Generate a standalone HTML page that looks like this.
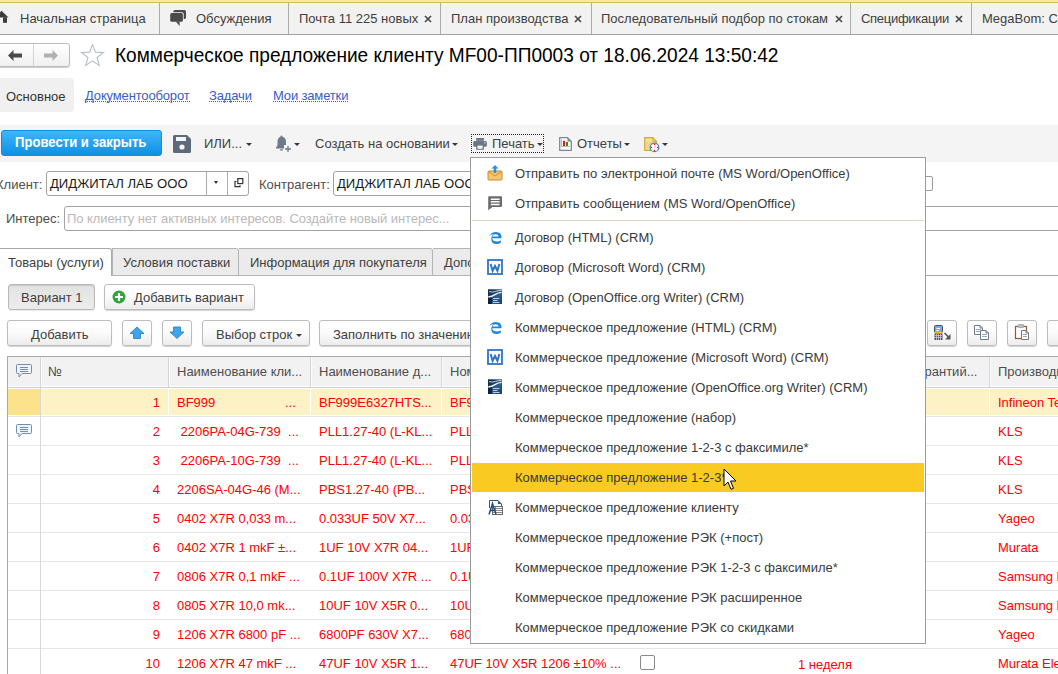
<!DOCTYPE html><html><head><meta charset="utf-8"><style>
*{box-sizing:border-box;margin:0;padding:0}
html,body{width:1058px;height:674px;overflow:hidden;background:#fff;font-family:"Liberation Sans",sans-serif;font-size:13px;color:#333;line-height:15px}
.a{position:absolute;white-space:nowrap}
.tsep{top:3px;width:1px;height:31px;background:#ababab}
.tt{top:10px;color:#404040}
.cls{top:10px;color:#555;font-size:15px;font-weight:bold}
.link{color:#3a5cc6;letter-spacing:-0.15px}
.arr{width:0;height:0;border-left:3px solid transparent;border-right:3px solid transparent;border-top:3px solid #3a3a3a}
.fld{border:1px solid #a3a3a3;border-radius:3px;background:#fff}
.btn{border:1px solid #bdbdbd;border-radius:3px;background:linear-gradient(#fff 0%,#fbfbfb 50%,#ececec 100%);box-shadow:0 1px 1px rgba(0,0,0,.18)}
.hl{color:#4d4d4d}
.red{color:#f00}
.mi{left:515px;color:#3a3a3a}
.gl{background:#e6e6e6;height:1px}
.t{font-size:13.6px;transform:translateY(0.5px) scaleX(0.956);transform-origin:0 0}
.tra{transform-origin:100% 0}
</style></head><body>
<div class="a" style="left:0;top:0;width:1058px;height:2px;background:#fce996"></div><div class="a" style="left:0;top:2px;width:1058px;height:1px;background:#c9bc6b"></div>
<div class="a" style="left:0;top:3px;width:1058px;height:32px;background:#f2f2f2;border-bottom:1px solid #a2a2a2"></div>
<svg class="a" style="left:0;top:10px" width="10" height="14" viewBox="0 0 10 14"><path d="M-5.5 7.6 L1.5 0.8 L8.5 7.6 Z" fill="#3c3c3c"/><rect x="3" y="7.4" width="4" height="5.4" fill="#3c3c3c"/></svg>
<div class="a tt t" style="left:20px">Начальная страница</div>
<div class="a tsep" style="left:159px"></div>
<svg class="a" style="left:169px;top:9px" width="19" height="18" viewBox="0 0 19 18"><rect x="4.3" y="1" width="12.7" height="9" rx="1.6" fill="#4a4a4a"/><rect x="0.3" y="3.2" width="14.4" height="10.4" rx="2" fill="#f2f2f2"/><rect x="1.2" y="4" width="12.7" height="8.8" rx="1.6" fill="#4a4a4a"/><path d="M6.8 12.5 L10.6 16.9 L10.6 12.5 Z" fill="#4a4a4a"/></svg>
<div class="a tt t" style="left:196px">Обсуждения</div>
<div class="a tsep" style="left:288px"></div>
<div class="a tt t" style="left:299px">Почта 11 225 новых</div>
<svg class="a" style="left:424px;top:15px" width="8" height="8" viewBox="0 0 8 8"><path d="M1 1 L7 7 M7 1 L1 7" stroke="#4a4a4a" stroke-width="1.7"/></svg>
<div class="a tsep" style="left:440px"></div>
<div class="a tt t" style="left:451px">План производства</div>
<svg class="a" style="left:574px;top:15px" width="8" height="8" viewBox="0 0 8 8"><path d="M1 1 L7 7 M7 1 L1 7" stroke="#4a4a4a" stroke-width="1.7"/></svg>
<div class="a tsep" style="left:591px"></div>
<div class="a tt t" style="left:601px">Последовательный подбор по стокам</div>
<svg class="a" style="left:835px;top:15px" width="8" height="8" viewBox="0 0 8 8"><path d="M1 1 L7 7 M7 1 L1 7" stroke="#4a4a4a" stroke-width="1.7"/></svg>
<div class="a tsep" style="left:850px"></div>
<div class="a tt t" style="left:861px;letter-spacing:-0.3px">Спецификации</div>
<svg class="a" style="left:955px;top:15px" width="8" height="8" viewBox="0 0 8 8"><path d="M1 1 L7 7 M7 1 L1 7" stroke="#4a4a4a" stroke-width="1.7"/></svg>
<div class="a tsep" style="left:971px"></div>
<div class="a tt t" style="left:982px">MegaBom: Спецификации</div>
<div class="a" style="left:-4px;top:43px;width:74px;height:24px;border:1px solid #bcbcbc;border-radius:3px;background:linear-gradient(#fff,#f0f0f0);box-shadow:0 1px 1px rgba(0,0,0,.2)"></div>
<div class="a" style="left:33px;top:44px;width:1px;height:22px;background:#d4d4d4"></div>
<svg class="a" style="left:8px;top:50px" width="14" height="11" viewBox="0 0 14 11"><path d="M0 5.5 L5.5 0 V3.5 H14 V7.5 H5.5 V11 Z" fill="#4a4a4a"/></svg>
<svg class="a" style="left:44px;top:50px" width="14" height="11" viewBox="0 0 14 11"><path d="M14 5.5 L8.5 0 V3.5 H0 V7.5 H8.5 V11 Z" fill="#b0b0b0"/></svg>
<svg class="a" style="left:80px;top:44px" width="25" height="23" viewBox="0 0 25 23"><path d="M12.50 0.40 L15.32 8.12 L23.53 8.42 L17.07 13.48 L19.32 21.38 L12.50 16.80 L5.68 21.38 L7.93 13.48 L1.47 8.42 L9.68 8.12 Z" fill="none" stroke="#b4bec8" stroke-width="1.1" stroke-linejoin="miter"/></svg>
<div class="a" style="left:115px;top:44px;font-size:19.6px;line-height:22px;color:#000;transform:scaleX(0.974);transform-origin:0 0">Коммерческое предложение клиенту MF00-ПП0003 от 18.06.2024 13:50:42</div>
<div class="a" style="left:-4px;top:78px;width:78px;height:34px;background:#f0f0f0;border-radius:4px"></div>
<div class="a t" style="left:6px;top:88px;color:#333">Основное</div>
<div class="a link" style="left:85px;top:88px">Документооборот<div style="position:absolute;left:0;right:0;top:13px;border-bottom:1px dotted #3a5cc6"></div></div>
<div class="a link" style="left:209px;top:88px">Задачи<div style="position:absolute;left:0;right:0;top:13px;border-bottom:1px dotted #3a5cc6"></div></div>
<div class="a link" style="left:273px;top:88px">Мои заметки<div style="position:absolute;left:0;right:0;top:13px;border-bottom:1px dotted #3a5cc6"></div></div>
<div class="a" style="left:0;top:125px;width:1058px;height:37px;background:#f4f4f4"></div>
<div class="a" style="left:1px;top:130px;width:161px;height:26px;border-radius:3px;background:linear-gradient(#42b5f8,#0b91e7);border:1px solid #0f8ee2"></div>
<div class="a" style="left:15px;top:135px;color:#fff;font-weight:bold;font-size:13.8px;transform:scaleX(0.95);transform-origin:0 0">Провести и закрыть</div>
<svg class="a" style="left:173px;top:135px" width="18" height="18" viewBox="0 0 18 18"><path d="M1.5 0 H14 L18 4 V16.5 Q18 18 16.5 18 H1.5 Q0 18 0 16.5 V1.5 Q0 0 1.5 0 Z" fill="#5e6a7b"/><rect x="3" y="2" width="10" height="4" fill="#f4f4f4"/><circle cx="9" cy="12" r="2.6" fill="#f4f4f4"/></svg>
<div class="a t" style="left:204px;top:135px;color:#404040">ИЛИ...</div>
<div class="a arr" style="left:246px;top:143px"></div>
<svg class="a" style="left:275px;top:135px" width="17" height="18" viewBox="0 0 17 18"><path d="M6.5 0.5 Q7.5 0.5 7.5 1.7 Q11 2.7 11 7 V10.5 L12.5 12.5 V13.5 H1 V12.5 L2.5 10.5 V7 Q2.5 2.7 5.5 1.7 Q5.5 0.5 6.5 0.5 Z" fill="#6f7b8a"/><path d="M5 14.2 H8 Q8 15.7 6.5 15.7 Q5 15.7 5 14.2Z" fill="#6f7b8a"/><rect x="9" y="10" width="8" height="8" fill="#f4f4f4"/><path d="M13 11 V17 M10 14 H16" stroke="#6f7b8a" stroke-width="1.3"/></svg>
<div class="a arr" style="left:294px;top:143px"></div>
<div class="a t" style="left:315px;top:135px;color:#404040">Создать на основании</div>
<div class="a arr" style="left:452px;top:143px"></div>
<div class="a" style="left:471px;top:134px;width:73px;height:19px;border:1px dotted #222"></div>
<svg class="a" style="left:473px;top:137px" width="15" height="14" viewBox="0 0 15 14"><rect x="3.2" y="1" width="7.7" height="2.8" fill="#6b7686"/><rect x="0.2" y="3.9" width="13.7" height="5.9" rx="1.5" fill="#6b7686"/><rect x="3.2" y="7.8" width="7.7" height="5" fill="#6b7686"/><rect x="4.5" y="8.6" width="5.1" height="3.2" fill="#f4f4f4"/><rect x="11.2" y="5.2" width="1.2" height="1.2" fill="#e8e8e8"/></svg>
<div class="a t" style="left:492px;top:135px;color:#404040">Печать</div>
<div class="a arr" style="left:537px;top:143px"></div>
<svg class="a" style="left:559px;top:137px" width="13" height="14" viewBox="0 0 13 14"><path d="M0.7 0.7 H8.5 L12.3 4.5 V13.3 H0.7 Z" fill="#fff" stroke="#7d8894" stroke-width="1.3" stroke-linejoin="round"/><path d="M8.5 0.7 L12.3 4.5 H8.5 Z" fill="#7d8894"/><path d="M2.5 2.5 V9.5 H11" fill="none" stroke="#8fa0b0" stroke-width="0.7"/><rect x="4" y="3.8" width="2" height="5.2" fill="#f01010"/><rect x="7" y="5" width="2" height="4" fill="#10a010"/></svg>
<div class="a t" style="left:577px;top:135px;color:#404040">Отчеты</div>
<div class="a arr" style="left:624px;top:143px"></div>
<svg class="a" style="left:644px;top:137px" width="16" height="16" viewBox="0 0 16 16"><path d="M0.7 0.7 H8.8 L12.3 4.2 V13.3 H0.7 Z" fill="#f6e08e" stroke="#c9a94a" stroke-width="1.2" stroke-linejoin="round"/><path d="M8.8 0.7 V4.2 H12.3" fill="none" stroke="#c9a94a"/><path d="M2.5 6 H4 M5 6 H7.5 M2.5 8 H3 M4 8 H6 M2.5 10 H4.5" stroke="#d8bd60" stroke-width="0.9"/><circle cx="10.5" cy="10.4" r="4.3" fill="#fff" stroke="#4a7fc0" stroke-width="1.2"/><circle cx="10.5" cy="7.4" r="0.7" fill="#e00"/><circle cx="10.5" cy="13.4" r="0.7" fill="#e00"/><circle cx="7.5" cy="10.4" r="0.7" fill="#e00"/><circle cx="13.5" cy="10.4" r="0.7" fill="#e00"/><path d="M10.5 10.4 L12 8.4" stroke="#7a9fd8" stroke-width="0.9"/></svg>
<div class="a arr" style="left:662px;top:143px"></div>
<div class="a t" style="left:-4px;top:176px;color:#4d4d4d">Клиент:</div>
<div class="a fld" style="left:46px;top:171px;width:203px;height:25px"></div>
<div class="a" style="left:206px;top:172px;width:1px;height:23px;background:#acacac"></div>
<div class="a" style="left:227px;top:172px;width:1px;height:23px;background:#acacac"></div>
<div class="a" style="left:50px;top:176px;color:#1a1a1a;font-size:13.1px">ДИДЖИТАЛ ЛАБ ООО</div>
<div class="a" style="left:214px;top:181px;width:0;height:0;border-left:2.5px solid transparent;border-right:2.5px solid transparent;border-top:3px solid #333"></div>
<svg class="a" style="left:234px;top:177px" width="10" height="11" viewBox="0 0 10 11"><rect x="3.8" y="1.6" width="5" height="5" fill="none" stroke="#333" stroke-width="1.2"/><path d="M2.4 4.5 H1 V9.6 H6 V8.2" fill="none" stroke="#333" stroke-width="1.2"/></svg>
<div class="a t" style="left:259px;top:176px;color:#4d4d4d">Контрагент:</div>
<div class="a fld" style="left:333px;top:171px;width:560px;height:25px"></div>
<div class="a" style="left:918px;top:176px;width:15px;height:15px;border:1px solid #9a9a9a;border-radius:2px;background:#fff"></div>
<div class="a" style="left:337px;top:176px;color:#1a1a1a;font-size:13.1px">ДИДЖИТАЛ ЛАБ ООО</div>
<div class="a t" style="left:6px;top:210px;color:#4d4d4d">Интерес:</div>
<div class="a fld" style="left:64px;top:206px;width:1000px;height:25px"></div>
<div class="a t" style="left:67px;top:210px;color:#b9b9b9;letter-spacing:-0.07px">По клиенту нет активных интересов. Создайте новый интерес...</div>
<div class="a" style="left:0;top:275px;width:1058px;height:1px;background:#a9a9a9"></div>
<div class="a" style="left:-2px;top:248px;width:114px;height:28px;border:1px solid #a9a9a9;border-bottom:none;border-radius:3px 3px 0 0;background:#fff"></div>
<div class="a t" style="left:8px;top:254px;color:#404040">Товары (услуги)</div>
<div class="a" style="left:112px;top:248px;width:127px;height:28px;border:1px solid #b4b4b4;border-left:none;border-radius:0 3px 0 0;background:#ebebeb"></div>
<div class="a t" style="left:123px;top:254px;color:#404040">Условия поставки</div>
<div class="a" style="left:239px;top:248px;width:194px;height:28px;border:1px solid #b4b4b4;border-left:none;border-radius:0 3px 0 0;background:#ebebeb"></div>
<div class="a t" style="left:250px;top:254px;color:#404040">Информация для покупателя</div>
<div class="a" style="left:433px;top:248px;width:120px;height:28px;border:1px solid #b4b4b4;border-left:none;border-radius:0 3px 0 0;background:#ebebeb"></div>
<div class="a t" style="left:444px;top:254px;color:#404040">Дополнительно</div>
<div class="a" style="left:112px;top:248px;width:1px;height:28px;background:#b4b4b4"></div>
<div class="a" style="left:8px;top:284px;width:87px;height:26px;border:1px solid #b9b9b9;border-radius:3px;background:linear-gradient(#e2e2e2,#ececec);box-shadow:inset 0 1px 1px rgba(0,0,0,.12), 0 1px 0 rgba(0,0,0,.08)"></div>
<div class="a t" style="left:21px;top:289px;color:#404040">Вариант 1</div>
<div class="a btn" style="left:104px;top:284px;width:151px;height:26px"></div>
<svg class="a" style="left:112px;top:290px" width="14" height="14" viewBox="0 0 14 14"><circle cx="7" cy="7" r="6.5" fill="#2fa43a"/><path d="M7 3 V11 M3 7 H11" stroke="#fff" stroke-width="2.2"/></svg>
<div class="a t" style="left:134px;top:289px;color:#404040">Добавить вариант</div>
<div class="a btn" style="left:7px;top:320px;width:105px;height:26px"></div>
<div class="a t" style="left:31px;top:326px;color:#404040">Добавить</div>
<div class="a btn" style="left:122px;top:320px;width:30px;height:26px"></div>
<svg class="a" style="left:129px;top:326px" width="16" height="14" viewBox="0 0 16 14"><path d="M8 1 L15 7.5 H11.5 V12.5 H4.5 V7.5 H1 Z" fill="#3fa5e8" stroke="#2b84c6" stroke-width="0.9" stroke-linejoin="round"/></svg>
<div class="a btn" style="left:162px;top:320px;width:30px;height:26px"></div>
<svg class="a" style="left:169px;top:326px" width="16" height="14" viewBox="0 0 16 14"><path d="M8 12.5 L15 6 H11.5 V1 H4.5 V6 H1 Z" fill="#3fa5e8" stroke="#2b84c6" stroke-width="0.9" stroke-linejoin="round"/></svg>
<div class="a btn" style="left:202px;top:320px;width:108px;height:26px"></div>
<div class="a t" style="left:216px;top:326px;color:#404040">Выбор строк</div>
<div class="a arr" style="left:296px;top:334px"></div>
<div class="a btn" style="left:319px;top:320px;width:200px;height:26px"></div>
<div class="a t" style="left:333px;top:326px;color:#404040">Заполнить по значению</div>
<div class="a btn" style="left:927px;top:320px;width:30px;height:26px"></div>
<div class="a btn" style="left:967px;top:320px;width:30px;height:26px"></div>
<div class="a btn" style="left:1007px;top:320px;width:30px;height:26px"></div>
<div class="a btn" style="left:1047px;top:320px;width:30px;height:26px"></div>
<svg class="a" style="left:926px;top:318px" width="132" height="30" viewBox="926 318 132 30">
<rect x="934.5" y="325.5" width="8" height="7" rx="1" fill="#62b6ee" stroke="#4a4f57"/>
<path d="M936.5 328.5 H940 M936.5 330.5 H939" stroke="#fff" stroke-width="1"/>
<rect x="935" y="332" width="7" height="2" fill="#f2cf1c"/>
<rect x="934.5" y="333.5" width="8" height="6.5" fill="#4f545c"/>
<path d="M936.5 334 V340 M938.5 334 V340 M940.5 334 V340" stroke="#c9ccd1" stroke-width="0.8"/>
<path d="M935 335.5 H942 M935 337.5 H942" stroke="#c9ccd1" stroke-width="0.8"/>
<path d="M944.5 333 L949.5 338" stroke="#555" stroke-width="1.6"/>
<path d="M950.5 334 V339.5 H945 Z" fill="#555"/>
<path d="M974.5 325.5 H980 L982.5 328 V334.5 H974.5 Z" fill="#fff" stroke="#6e7b8b"/>
<path d="M980 325.5 V328 H982.5" fill="none" stroke="#6e7b8b"/>
<path d="M976 329.5 H981 M976 331.5 H981" stroke="#9aa6b4"/>
<path d="M980.5 330.5 H986 L988.5 333 V339.5 H980.5 Z" fill="#fff" stroke="#6e7b8b"/>
<path d="M986 330.5 V333 H988.5" fill="none" stroke="#6e7b8b"/>
<path d="M982 334.5 H987 M982 336.5 H987" stroke="#9aa6b4"/>
<rect x="1015.5" y="326.5" width="11" height="12" fill="#fff" stroke="#a0522d" stroke-width="1.2"/>
<rect x="1018" y="324.5" width="6" height="3" rx="1" fill="#b9bec4" stroke="#8a8f96" stroke-width="0.6"/>
<path d="M1021.5 330.5 H1026 L1028.5 333 V339.5 H1021.5 Z" fill="#fff" stroke="#6e7b8b"/>
<path d="M1026 330.5 V333 H1028.5" fill="none" stroke="#6e7b8b"/>
<path d="M1023 334.5 H1027 M1023 336.5 H1027" stroke="#9aa6b4"/>
</svg>
<div class="a" style="left:7px;top:356px;width:1060px;height:330px;border:1px solid #a9a9a9;border-right:none;border-bottom:none"></div>
<div class="a" style="left:8px;top:357px;width:1050px;height:29px;background:#f2f2f2"></div><div class="a" style="left:8px;top:387px;width:1050px;height:1px;background:#cfcfcf"></div>
<div class="a" style="left:40px;top:357px;width:2px;height:30px;border-left:1px solid #d6d6d6;border-right:1px solid #fbfbfb"></div>
<div class="a" style="left:168px;top:357px;width:2px;height:30px;border-left:1px solid #d6d6d6;border-right:1px solid #fbfbfb"></div>
<div class="a" style="left:310px;top:357px;width:2px;height:30px;border-left:1px solid #d6d6d6;border-right:1px solid #fbfbfb"></div>
<div class="a" style="left:441px;top:357px;width:2px;height:30px;border-left:1px solid #d6d6d6;border-right:1px solid #fbfbfb"></div>
<div class="a" style="left:989px;top:357px;width:2px;height:30px;border-left:1px solid #d6d6d6;border-right:1px solid #fbfbfb"></div>
<svg class="a" style="left:16px;top:364px" width="16" height="14" viewBox="0 0 16 14"><path d="M1.5 0.5 H14.5 Q15.5 0.5 15.5 1.5 V8.5 Q15.5 9.5 14.5 9.5 H6 L3 13 V9.5 H1.5 Q0.5 9.5 0.5 8.5 V1.5 Q0.5 0.5 1.5 0.5 Z" fill="#eef4fb" stroke="#6f8fb0"/><path d="M4 3.5 H12 M4 5.5 H12 M4 7.5 H12" stroke="#6f8fb0"/></svg>
<div class="a hl t" style="left:48px;top:363px">№</div>
<div class="a hl t" style="left:177px;top:363px">Наименование кли...</div>
<div class="a hl t" style="left:319px;top:363px">Наименование д...</div>
<div class="a hl t" style="left:450px;top:363px">Номенклатура</div>
<div class="a hl t" style="left:911px;top:363px">Гарантий...</div>
<div class="a hl t" style="left:998px;top:363px">Производитель</div>
<div class="a" style="left:8px;top:389px;width:32px;height:26px;background:#fce28b"></div>
<div class="a" style="left:41px;top:389px;width:1017px;height:26px;background:#fdf1c6"></div>
<div class="a" style="left:168px;top:389px;width:1px;height:26px;background:#fff"></div>
<div class="a" style="left:310px;top:389px;width:1px;height:26px;background:#fff"></div>
<div class="a" style="left:441px;top:389px;width:1px;height:26px;background:#fff"></div>
<div class="a" style="left:989px;top:389px;width:1px;height:26px;background:#fff"></div>
<div class="a gl" style="left:8px;top:416px;width:1050px"></div>
<div class="a red tra t" style="left:40px;top:394px;width:120px;text-align:right">1</div>
<div class="a red t" style="left:177px;top:394px">BF999</div><div class="a red t" style="left:285px;top:394px">...</div>
<div class="a red t" style="left:319px;top:394px">BF999E6327HTS...</div>
<div class="a red t" style="left:450px;top:394px">BF999E6327HTSA1</div>
<div class="a red t" style="left:998px;top:394px">Infineon Technologies</div>
<div class="a gl" style="left:8px;top:445px;width:1050px"></div>
<div class="a red tra t" style="left:40px;top:423px;width:120px;text-align:right">2</div>
<div class="a red t" style="left:177px;top:423px;white-space:pre"> 2206PA-04G-739  ...</div>
<div class="a red t" style="left:319px;top:423px">PLL1.27-40 (L-KL...</div>
<div class="a red t" style="left:450px;top:423px">PLL1.27-40</div>
<div class="a red t" style="left:998px;top:423px">KLS</div>
<div class="a gl" style="left:8px;top:474px;width:1050px"></div>
<div class="a red tra t" style="left:40px;top:452px;width:120px;text-align:right">3</div>
<div class="a red t" style="left:177px;top:452px;white-space:pre"> 2206PA-10G-739  ...</div>
<div class="a red t" style="left:319px;top:452px">PLL1.27-40 (L-KL...</div>
<div class="a red t" style="left:450px;top:452px">PLL1.27-40</div>
<div class="a red t" style="left:998px;top:452px">KLS</div>
<div class="a gl" style="left:8px;top:503px;width:1050px"></div>
<div class="a red tra t" style="left:40px;top:481px;width:120px;text-align:right">4</div>
<div class="a red t" style="left:177px;top:481px">2206SA-04G-46 (M...</div>
<div class="a red t" style="left:319px;top:481px">PBS1.27-40 (PB...</div>
<div class="a red t" style="left:450px;top:481px">PBS1.27-40</div>
<div class="a red t" style="left:998px;top:481px">KLS</div>
<div class="a gl" style="left:8px;top:532px;width:1050px"></div>
<div class="a red tra t" style="left:40px;top:510px;width:120px;text-align:right">5</div>
<div class="a red t" style="left:177px;top:510px">0402 X7R 0,033 m...</div>
<div class="a red t" style="left:319px;top:510px">0.033UF 50V X7...</div>
<div class="a red t" style="left:450px;top:510px">0.033UF</div>
<div class="a red t" style="left:998px;top:510px">Yageo</div>
<div class="a gl" style="left:8px;top:561px;width:1050px"></div>
<div class="a red tra t" style="left:40px;top:539px;width:120px;text-align:right">6</div>
<div class="a red t" style="left:177px;top:539px">0402 X7R 1 mkF ±...</div>
<div class="a red t" style="left:319px;top:539px">1UF 10V X7R 04...</div>
<div class="a red t" style="left:450px;top:539px">1UF 10V</div>
<div class="a red t" style="left:998px;top:539px">Murata</div>
<div class="a gl" style="left:8px;top:590px;width:1050px"></div>
<div class="a red tra t" style="left:40px;top:568px;width:120px;text-align:right">7</div>
<div class="a red t" style="left:177px;top:568px">0806 X7R 0,1 mkF ...</div>
<div class="a red t" style="left:319px;top:568px">0.1UF 100V X7R ...</div>
<div class="a red t" style="left:450px;top:568px">0.1UF</div>
<div class="a red t" style="left:998px;top:568px">Samsung Electro</div>
<div class="a gl" style="left:8px;top:619px;width:1050px"></div>
<div class="a red tra t" style="left:40px;top:597px;width:120px;text-align:right">8</div>
<div class="a red t" style="left:177px;top:597px">0805 X7R 10,0 mk...</div>
<div class="a red t" style="left:319px;top:597px">10UF 10V X5R 0...</div>
<div class="a red t" style="left:450px;top:597px">10UF</div>
<div class="a red t" style="left:998px;top:597px">Samsung Electro</div>
<div class="a gl" style="left:8px;top:648px;width:1050px"></div>
<div class="a red tra t" style="left:40px;top:626px;width:120px;text-align:right">9</div>
<div class="a red t" style="left:177px;top:626px">1206 X7R 6800 pF ...</div>
<div class="a red t" style="left:319px;top:626px">6800PF 630V X7...</div>
<div class="a red t" style="left:450px;top:626px">6800PF</div>
<div class="a red t" style="left:998px;top:626px">Yageo</div>
<div class="a gl" style="left:8px;top:677px;width:1050px"></div>
<div class="a red tra t" style="left:40px;top:655px;width:120px;text-align:right">10</div>
<div class="a red t" style="left:177px;top:655px">1206 X7R 47 mkF ...</div>
<div class="a red t" style="left:319px;top:655px">47UF 10V X5R 1...</div>
<div class="a red t" style="left:450px;top:655px">47UF 10V X5R 1206 ±10% ...</div>
<div class="a red t" style="left:998px;top:655px">Murata Electronics</div>
<div class="a" style="left:40px;top:388px;width:1px;height:290px;background:#d9d9d9"></div>
<svg class="a" style="left:16px;top:424px" width="16" height="14" viewBox="0 0 16 14"><path d="M1.5 0.5 H14.5 Q15.5 0.5 15.5 1.5 V8.5 Q15.5 9.5 14.5 9.5 H6 L3 13 V9.5 H1.5 Q0.5 9.5 0.5 8.5 V1.5 Q0.5 0.5 1.5 0.5 Z" fill="#eef4fb" stroke="#6f8fb0"/><path d="M4 3.5 H12 M4 5.5 H12 M4 7.5 H12" stroke="#6f8fb0"/></svg>
<div class="a" style="left:640px;top:655px;width:15px;height:15px;border:1px solid #8a8a8a;border-radius:2px;background:#fff"></div>
<div class="a red t" style="left:798px;top:656px">1 неделя</div>
<div class="a" style="left:470px;top:157px;width:456px;height:487px;background:#fff;border:1px solid #9c9c9c"></div>
<div class="a" style="left:472px;top:220px;width:452px;height:1px;background:#ddd8c8"></div>
<div class="a mi t" style="top:165px">Отправить по электронной почте (MS Word/OpenOffice)</div>
<div class="a mi t" style="top:195px">Отправить сообщением (MS Word/OpenOffice)</div>
<div class="a mi t" style="top:229px">Договор (HTML) (CRM)</div>
<div class="a mi t" style="top:259px">Договор (Microsoft Word) (CRM)</div>
<div class="a mi t" style="top:289px">Договор (OpenOffice.org Writer) (CRM)</div>
<div class="a mi t" style="top:319px">Коммерческое предложение (HTML) (CRM)</div>
<div class="a mi t" style="top:349px">Коммерческое предложение (Microsoft Word) (CRM)</div>
<div class="a mi t" style="top:379px">Коммерческое предложение (OpenOffice.org Writer) (CRM)</div>
<div class="a mi t" style="top:409px">Коммерческое предложение (набор)</div>
<div class="a mi t" style="top:439px">Коммерческое предложение 1-2-3 с факсимиле*</div>
<div class="a" style="left:472px;top:463px;width:452px;height:29px;background:#f9ca21"></div>
<div class="a mi t" style="top:469px">Коммерческое предложение 1-2-3*</div>
<div class="a mi t" style="top:499px">Коммерческое предложение клиенту</div>
<div class="a mi t" style="top:529px">Коммерческое предложение РЭК (+пост)</div>
<div class="a mi t" style="top:559px">Коммерческое предложение РЭК 1-2-3 с факсимиле*</div>
<div class="a mi t" style="top:589px">Коммерческое предложение РЭК расширенное</div>
<div class="a mi t" style="top:619px">Коммерческое предложение РЭК со скидками</div>
<svg class="a" style="left:487px;top:165px" width="16" height="16" viewBox="0 0 16 16"><rect x="1" y="6" width="14" height="9" rx="1" fill="#f5c66a" stroke="#d08a2a"/><path d="M1.5 6.5 L8 11 L14.5 6.5" fill="none" stroke="#d08a2a"/><path d="M8 0 L11.5 3.5 H9.3 V8 H6.7 V3.5 H4.5 Z" fill="#2d8fe0"/></svg>
<svg class="a" style="left:487px;top:195px" width="16" height="16" viewBox="0 0 16 16"><path d="M2 1.3 H14 Q15 1.3 15 2.3 V11 Q15 12 14 12 H5.5 L1.2 15.2 V2.3 Q1.2 1.3 2 1.3 Z" fill="#6b6b6b"/><path d="M3.8 4.2 H12.6 M3.8 6.8 H12.6 M3.8 9.4 H12.6" stroke="#fff" stroke-width="1.5"/></svg>
<svg class="a" style="left:487px;top:229px" width="16" height="16" viewBox="0 0 16 16"><path d="M5.2 9.3 H14.6 Q14.8 3 9 3 Q4.5 3 2.2 7.2 Q4 5 6.5 5.2 Q4.6 6.8 4.2 9.5 Q4.2 15 9.5 15 Q12 15 13.8 13.8 V11.3 Q12 12.6 10 12.6 Q5.6 12.6 5.2 9.3 Z M5.4 7.4 Q6.3 5.3 8.7 5.3 Q11.4 5.3 11.7 7.4 Z" fill="#1e86dc"/></svg>
<svg class="a" style="left:487px;top:319px" width="16" height="16" viewBox="0 0 16 16"><path d="M5.2 9.3 H14.6 Q14.8 3 9 3 Q4.5 3 2.2 7.2 Q4 5 6.5 5.2 Q4.6 6.8 4.2 9.5 Q4.2 15 9.5 15 Q12 15 13.8 13.8 V11.3 Q12 12.6 10 12.6 Q5.6 12.6 5.2 9.3 Z M5.4 7.4 Q6.3 5.3 8.7 5.3 Q11.4 5.3 11.7 7.4 Z" fill="#1e86dc"/></svg>
<svg class="a" style="left:487px;top:259px" width="16" height="16" viewBox="0 0 16 16"><rect x="1" y="1" width="14" height="14" fill="#fff" stroke="#2f74c8" stroke-width="1.8"/><path d="M3.6 5 L5.6 11.8 L8 7 L10.4 11.8 L12.4 5" fill="none" stroke="#2f74c8" stroke-width="2" stroke-linejoin="miter"/></svg>
<svg class="a" style="left:487px;top:349px" width="16" height="16" viewBox="0 0 16 16"><rect x="1" y="1" width="14" height="14" fill="#fff" stroke="#2f74c8" stroke-width="1.8"/><path d="M3.6 5 L5.6 11.8 L8 7 L10.4 11.8 L12.4 5" fill="none" stroke="#2f74c8" stroke-width="2" stroke-linejoin="miter"/></svg>
<svg class="a" style="left:487px;top:289px" width="16" height="16" viewBox="0 0 16 16"><defs><linearGradient id="oog" x1="0" y1="0" x2="1" y2="1"><stop offset="0" stop-color="#0b1f3a"/><stop offset="0.6" stop-color="#2f5f8f"/><stop offset="1" stop-color="#1a3c63"/></linearGradient></defs><rect x="1" y="0.3" width="14" height="14.7" fill="url(#oog)"/><rect x="1" y="7" width="3.8" height="8" fill="#0d2240"/><path d="M1.3 8 Q5 7.6 8 5.6 Q11 3.6 14.6 3.4" stroke="#f4f8fc" stroke-width="1.3" fill="none"/><path d="M2 2.6 Q5.5 3.6 8.5 2.4 Q11.5 1.3 14.5 1.5" stroke="#d8e4ee" stroke-width="0.9" fill="none"/><path d="M6 9.5 H12.5 M6 11.5 H10.5 M6 13.5 H12.5" stroke="#c9daea" stroke-width="0.9"/></svg>
<svg class="a" style="left:487px;top:379px" width="16" height="16" viewBox="0 0 16 16"><defs><linearGradient id="oog" x1="0" y1="0" x2="1" y2="1"><stop offset="0" stop-color="#0b1f3a"/><stop offset="0.6" stop-color="#2f5f8f"/><stop offset="1" stop-color="#1a3c63"/></linearGradient></defs><rect x="1" y="0.3" width="14" height="14.7" fill="url(#oog)"/><rect x="1" y="7" width="3.8" height="8" fill="#0d2240"/><path d="M1.3 8 Q5 7.6 8 5.6 Q11 3.6 14.6 3.4" stroke="#f4f8fc" stroke-width="1.3" fill="none"/><path d="M2 2.6 Q5.5 3.6 8.5 2.4 Q11.5 1.3 14.5 1.5" stroke="#d8e4ee" stroke-width="0.9" fill="none"/><path d="M6 9.5 H12.5 M6 11.5 H10.5 M6 13.5 H12.5" stroke="#c9daea" stroke-width="0.9"/></svg>
<svg class="a" style="left:488px;top:499px" width="16" height="16" viewBox="0 0 16 16"><path d="M1.5 9 V1.5 H10 L13.5 5 V7" fill="#fff" stroke="#2c5a80" stroke-width="1"/><path d="M10 1.5 L13.5 5 H10 Z" fill="#2c5a80"/><rect x="4.5" y="7.5" width="10" height="8" fill="#fff" stroke="#6a6a6a"/><path d="M5 9.5 H14 M5 11.5 H14 M5 13.5 H14 M7.5 8 V15" stroke="#777" stroke-width="0.9"/><path d="M1 15.5 L4.5 4.5 L8 15.5 M2.4 11.5 H6.6" fill="none" stroke="#1f4f7a" stroke-width="1.5"/></svg>
<svg class="a" style="left:723px;top:468px" width="15" height="24" viewBox="0 0 15 24"><path d="M1 1 V18 L5 14 L8 21.3 L10.5 20.3 L7.5 13 H13 Z" fill="#fff" stroke="#000" stroke-width="1"/></svg>
</body></html>
